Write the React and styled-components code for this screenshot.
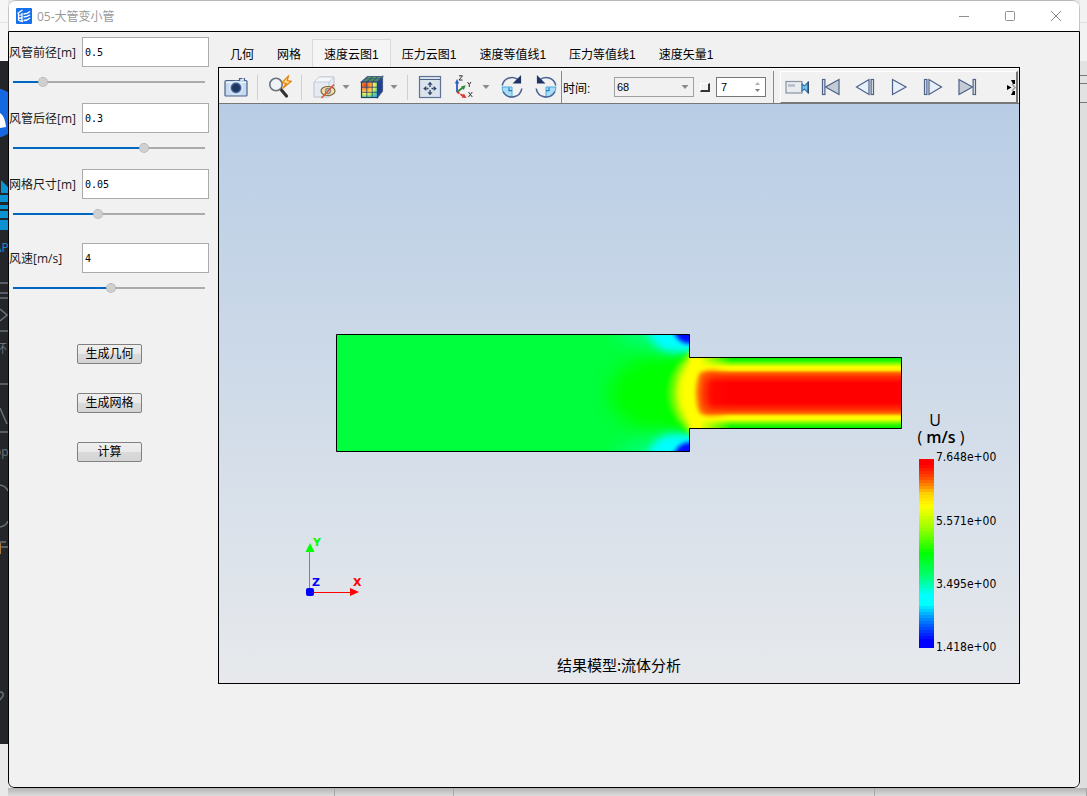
import React, { useState } from 'react'
import styled, { createGlobalStyle } from 'styled-components'

const GlobalStyle = createGlobalStyle`
* {
    box-sizing: border-box;
}
body {
    margin: 0;
    background: #e9e9e9;
    color: #1a1a1a;
    font-family: "Open Sans", "Noto Sans CJK SC", sans-serif;
    font-size: 12px;
}
button, input, select {
    font: inherit;
    color: inherit;
    margin: 0;
}
`

/* desktop behind the window */

const Desktop = styled.div`
display: grid;
grid-template-columns: 8px 1fr 7px;
grid-template-rows: 1fr 8px;
height: 100vh;
min-height: 700px;
overflow: hidden;
`

const LeftStrip = styled.svg`
grid-row: 1 / 3;
width: 8px;
height: 100%;
`

const RightStrip = styled.svg`
width: 7px;
height: 100%;
`

const BottomStrip = styled.div`
grid-column: 2 / 4;
display: flex;
background: linear-gradient(#b4b4b4, #dcdcdc);
`

const BottomCell = styled.div`
flex: ${props => props.$grow};
border-right: 1px solid #a8a8a8;
`

/* window */

const Window = styled.div`
display: flex;
flex-direction: column;
min-width: 0;
background: #f1f1f1;
border: 1px solid #b9b9b9;
border-width: 1px 0 0 0;
border-radius: 8px 8px 6px 6px;
overflow: hidden;
`

const TitleBar = styled.header`
display: flex;
align-items: center;
height: 30px;
padding-left: 7px;
background: white;
border: 1px solid #c4c4c4;
border-width: 0 1px;
color: #999;
`

const Title = styled.h1`
flex: 1;
margin: 0 0 0 5px;
font-size: 12px;
font-weight: 400;
`

const WindowButton = styled.button`
width: 46px;
height: 29px;
padding: 0;
border: 0;
background: none;
display: grid;
place-items: center;
`

const Body = styled.div`
flex: 1;
display: flex;
min-height: 0;
border: 1px solid black;
border-radius: 0 0 6px 6px;
`

/* parameter panel */

const Sidebar = styled.form`
width: 209px;
flex: none;
padding-top: 5px;
`

const Param = styled.div`
display: grid;
grid-template-columns: 73px 127px;
row-gap: 7px;
align-items: center;
margin-bottom: ${props => props.$last ? '48px' : '13px'};
margin-top: ${props => props.$last ? '21px' : '0'};
`

const ParamLabel = styled.label`
white-space: nowrap;
`

const TextInput = styled.input`
height: 30px;
width: 100%;
padding: 0 2px;
background: white;
border: 1px solid #ababab;
font-family: "DejaVu Sans Mono", monospace;
font-size: 10px;
color: black;
`

const Slider = styled.input`
grid-column: 1 / 3;
appearance: none;
height: 16px;
margin: 0 4px;
background: none;

&::-webkit-slider-runnable-track {
    height: 2px;
    background: linear-gradient(to right, #0067c0 var(--fill), #ababab var(--fill));
}
&::-webkit-slider-thumb {
    appearance: none;
    width: 10px;
    height: 10px;
    margin-top: -4px;
    border: 1px dotted #a8a8a8;
    border-radius: 50%;
    background: #d0d0d0;
}
`

const Actions = styled.div`
display: flex;
flex-direction: column;
align-items: center;
gap: 29px;
padding-right: 8px;
`

const ActionButton = styled.button`
width: 65px;
height: 20px;
padding: 0;
border: 1px solid #808080;
border-radius: 2px;
background: linear-gradient(#efefef, #e9e9e9 50%, #dadada 50%, #d4d4d4);
color: black;
line-height: 18px;
`

/* result viewer */

const Main = styled.main`
flex: 1;
min-width: 0;
display: flex;
flex-direction: column;
padding: 7px 59px 103px 0;
`

const Tabs = styled.div`
display: flex;
`

const Tab = styled.button`
height: 28px;
padding: 0 11px;
border: 1px solid ${props => props.$active ? '#dadada' : 'transparent'};
border-bottom: 0;
background: ${props => props.$active ? '#f5f5f5' : 'none'};
color: black;
font-family: "Liberation Sans", "Noto Sans CJK SC", sans-serif;
white-space: nowrap;

& + & {
    margin-left: -1px;
}
`

const Viewer = styled.section`
flex: 1;
min-height: 0;
display: flex;
flex-direction: column;
border: 1px solid black;
`

const Toolbar = styled.div`
flex: none;
display: flex;
height: 36px;
padding: 2px 1px 0 5px;
border-top: 1px solid white;
border-bottom: 1px solid #777;
font-family: "Liberation Sans", "Noto Sans CJK SC", sans-serif;
color: black;
`

const ToolGroup = styled.div`
display: flex;
align-items: center;
align-self: center;
gap: 10px;
height: 25px;

& + & {
    margin-left: 9px;
    padding-left: 10px;
    border-left: 1px solid #cfcfcf;
}
`

const ToolButton = styled.button`
display: flex;
align-items: center;
gap: 6px;
padding: 0;
border: 0;
background: none;
`

const TimeBar = styled.div`
display: flex;
align-items: center;
margin-left: 3px;
padding: 0 7px 0 1px;
border: 1px solid #8a8a8a;
border-width: 0 1px;
`

const TimeLabel = styled.label`
width: 51px;
font-size: 12px;
`

const TimeSelect = styled.div`
display: flex;
align-items: center;
height: 20px;
width: 80px;
border: 1px solid #a0a0a0;

select {
    appearance: none;
    flex: 1;
    min-width: 0;
    height: 18px;
    padding: 0 2px;
    border: 0;
    background: none;
    font-size: 11px;
}
svg {
    margin-right: 4px;
    margin-left: -12px;
    pointer-events: none;
}
`

const Notch = styled.span`
width: 10px;
height: 9px;
margin: 0 6px;
border: 1px solid #fff;
border-right: 2px solid #333;
border-bottom: 2px solid #333;
`

const Spin = styled.div`
display: flex;
height: 20px;
width: 50px;
background: white;
border: 1px solid #777;

input {
    appearance: textfield;
    flex: 1;
    min-width: 0;
    padding: 0 4px;
    border: 0;
    background: none;
    font-size: 11px;
}
input::-webkit-inner-spin-button {
    display: none;
}
`

const SpinButtons = styled.div`
display: flex;
flex-direction: column;
justify-content: center;
gap: 1px;
width: 16px;
`

const SpinButton = styled.button`
height: 6px;
padding: 0;
border: 0;
background: none;
display: grid;
place-items: center;
`

const Playback = styled.div`
flex: 1;
display: flex;
align-items: center;
gap: 10px;
margin-left: 6px;
padding-left: 4px;
border: 1px solid white;
border-right: 2px solid #777;
border-bottom: 1px solid #777;
`

const MoreButton = styled(ToolButton)`
margin-left: auto;
`

const Scene = styled.svg`
flex: 1;
min-height: 0;
width: 100%;
background: linear-gradient(#b8cde5, #e7e9ec);
`

const tones = {
    line: '#4d6288',
    dark: '#2b3f66',
}

const Icon = ({ children, size = 24 }) => (
    <svg width={size} height={size} viewBox="0 0 24 24" fill="none" stroke={tones.line} strokeWidth="1.2">
        {children}
    </svg>
)

const Caret = () => (
    <svg width="8" height="4" viewBox="0 0 8 4" fill="#8a8a8a">
        <path d="M.5 0h7L4 4z" />
    </svg>
)

const SmallCaret = ({ up }) => (
    <svg width="5" height="3" viewBox="0 0 5 3" fill={up ? '#b0b0b0' : '#808080'}>
        <path d={up ? 'M0 3h5L2.5 0z' : 'M0 0h5L2.5 3z'} />
    </svg>
)

const CameraIcon = () => (
    <Icon>
        <path d="M2.500 5.500h13v-2h5v2H22q1 0 1 1V20q0 1-1 1H2q-1 0-1-1V6.500q0-1 1.500-1z" fill="#c6daf0" />
        <path d="M2 7.500h20" stroke="#f4f9ff" />
        <circle cx="12" cy="12.800" r="6.500" fill="#8fabd0" stroke="#e6eff9" />
        <circle cx="12" cy="12.800" r="4.500" fill="#1e3663" stroke="#3f5d92" />
        <path d="M18 4h2" stroke="#fff" />
    </Icon>
)

const ZoomIcon = () => (
    <Icon>
        <path d="M13 14.500l5.500 6.500" stroke="#333" strokeWidth="3.200" strokeLinecap="round" />
        <circle cx="8" cy="9.500" r="6.200" fill="#eef3f8" stroke="#6a727c" strokeWidth="1.600" />
        <path d="M20.500 1L14 7.500l4.200.8L14.500 13.500l8.800-7.200-4-.8z" fill="#ffdf8a" stroke="#e8820c" strokeWidth="1.200" />
    </Icon>
)

const SectionIcon = () => (
    <Icon>
        <path d="M2 7l5-5h15v14l-5 6H2z" fill="#e6ebf1" stroke="#b9c2cd" strokeWidth="1" />
        <path d="M2 7l5-5h15l-5 5z" fill="#f4f7fa" stroke="#c6ced8" strokeWidth="1" />
        <path d="M17 7v14" stroke="#b9c2cd" strokeWidth="1" />
        <ellipse cx="16" cy="16" rx="7" ry="4.500" fill="#f6dfa0" stroke="#75664a" />
        <circle cx="16" cy="16" r="2.600" fill="#aebfd6" stroke="#8d8a80" />
        <path d="M9.500 23L22 9.500" stroke="#e0532c" strokeWidth="1.400" />
    </Icon>
)

const ContourIcon = () => (
    <Icon>
        <defs>
            <radialGradient id="cube" cx=".25" cy=".2" r="1">
                <stop offset="0" stopColor="#f03c20" />
                <stop offset=".35" stopColor="#ffb040" />
                <stop offset=".55" stopColor="#ffee50" />
                <stop offset=".75" stopColor="#6fdc80" />
                <stop offset="1" stopColor="#30b0f0" />
            </radialGradient>
        </defs>
        <path d="M1.500 7l6-5.500h15l-5 5.500z" fill="#68b86a" />
        <path d="M17.500 7l5-5.500V16l-5 6.500z" fill="#1c3fb8" />
        <rect x="1.500" y="7" width="16" height="15.500" fill="url(#cube)" stroke="#24406b" />
        <path d="M6.800 7v15.500M12.200 7v15.500M1.500 12.200h16M1.500 17.300h16M3.500 5h15.600M5.500 3.200h15.500M6.800 7l6-5.500M12.200 7l5.500-5.500M19.200 5v15.200M21 3.200V18M17.500 12l5-5M17.500 17.300l5-5.500"
            stroke="#26406f" strokeWidth=".8" />
    </Icon>
)

const FitIcon = () => (
    <Icon>
        <rect x="1.500" y="1.500" width="21" height="21" fill="#dbe3ec" stroke="#5f7396" />
        <path d="M2 4.500h20" stroke="#4d6288" strokeWidth="1.200" />
        <path d="M12 6.800l2.600 3H9.400zM12 20.200l2.600-3H9.400zM5.300 13.500l3-2.600v5.200zM18.700 13.500l-3-2.600v5.200z" fill={tones.dark} stroke="none" />
        <path d="M12 10v2M12 15v2M8.500 13.500h2M13.500 13.500h2" stroke={tones.dark} strokeWidth="1.400" />
    </Icon>
)

const AxesIcon = () => (
    <Icon>
        <path d="M5 17V7" stroke="#2f5cc0" strokeWidth="1.800" />
        <path d="M5 4L2.800 8.500h4.400z" fill="#2f5cc0" stroke="none" />
        <path d="M5 17l6-4.500" stroke="#2c8a3a" strokeWidth="1.800" />
        <path d="M13.800 10.300L9 11.500l2.800 3.600z" fill="#2c8a3a" stroke="none" />
        <path d="M5 17l6 3.800" stroke="#e03030" strokeWidth="1.800" strokeDasharray="3 1" />
        <path d="M14.500 23l-5-.6 2.400-3.800z" fill="#e03030" stroke="none" />
        <path d="M7 .8h3.500L7 5h3.500M15.500 7l1.800 2.500L19 7M17.300 9.500V12M16.500 17l3.800 5M20.300 17l-3.800 5" stroke="#333" strokeWidth="1" />
    </Icon>
)

const RotateIcon = ({ flip }) => (
    <Icon>
        <g transform={flip ? 'matrix(-1 0 0 1 24 0)' : undefined}>
            <path d="M2 12h10v10A10 10 0 0 1 2 12z" fill="#a9dcf8" stroke="#4aa8de" strokeWidth="1" />
            <path d="M9 12.500v3.200H12" stroke="#1f7fc0" />
            <path d="M2.200 10.500A10 10 0 0 1 18.500 5M21.800 13.500A10 10 0 0 1 3 16.500" stroke="#4a6496" strokeWidth="1.600" />
            <path d="M20.500 1.500v6.500h-6.500z" fill="#1f3566" stroke="#1f3566" />
        </g>
    </Icon>
)

const VideoIcon = () => (
    <Icon>
        <rect x="1" y="6.500" width="16" height="11.500" fill="#e9ebee" stroke="#8793a6" />
        <path d="M3 10.500h7" stroke="#b4bbc6" strokeWidth="2.500" />
        <path d="M17 9l2.500 2L23 7.500v10L19.500 14 17 16z" fill="#7cc4ea" stroke="#2d78ad" />
        <path d="M23.300 6.500v12" stroke={tones.dark} strokeWidth="1.200" />
    </Icon>
)

const FirstIcon = ({ flip }) => (
    <Icon>
        <g transform={flip ? 'matrix(-1 0 0 1 24 0)' : undefined}>
            <path d="M20 4.500v15L6.500 12z" fill="#c5ccd6" />
            <rect x="3.500" y="4.500" width="2.400" height="15" fill="#dfe6ee" />
        </g>
    </Icon>
)

const StepIcon = ({ flip }) => (
    <Icon>
        <g transform={flip ? 'matrix(-1 0 0 1 24 0)' : undefined}>
            <rect x="3.500" y="4.500" width="2.400" height="15" fill="#dfe6ee" />
            <path d="M8 4.500v15L20.500 12z" fill="#e6effa" />
        </g>
    </Icon>
)

const PlayIcon = () => (
    <Icon>
        <path d="M5.500 4.500v15L19 12z" fill="#e6effa" />
    </Icon>
)

const MoreIcon = () => (
    <svg width="9" height="15" viewBox="0 0 9 15">
        <path d="M0 5l4.500 2.500L0 10z" fill="black" />
        <path d="M4 0h4v4H6zM4 15h4v-4H6z" fill="black" />
        <path d="M5 4l3 3.500L5 11" fill="none" stroke="#a0a0a0" strokeWidth="1.500" />
    </svg>
)

const AppIcon = () => (
    <svg width="16" height="16" viewBox="0 0 16 16">
        <rect width="16" height="16" rx="1" fill="#1670ee" />
        <path d="M1.500 5.500L6.500 2M2.500 5.500V12q2 1.500 4.500 1.500M2.500 7.500L6 6.500M2.500 10H6M6 5v8M7.500 6q4 0 6.500-2.500M7.500 9q4 0 6.500-2.300M7.500 12.500q4 0 6.500-2.500"
            fill="none" stroke="white" strokeWidth="1.300" />
    </svg>
)

/* colour scale of the velocity legend, from the maximum down */
const scale = [
    [0, 255, 0, 0], [0.03, 255, 0, 0], [0.1, 255, 75, 0], [0.15, 255, 150, 0], [0.18, 255, 205, 0],
    [0.25, 255, 255, 0], [0.37, 150, 255, 0], [0.5, 0, 255, 0], [0.62, 0, 255, 115], [0.72, 0, 255, 255],
    [0.77, 0, 255, 255], [0.83, 0, 160, 255], [0.9, 0, 70, 255], [0.96, 0, 0, 255], [1, 0, 0, 255],
]

const colorAt = t => {
    const i = Math.max(1, scale.findIndex(stop => stop[0] >= t))
    const a = scale[i - 1]
    const b = scale[i]
    const k = (t - a[0]) / (b[0] - a[0])
    const mix = [1, 2, 3].map(c => Math.round(a[c] + (b[c] - a[c]) * k))
    return `rgb(${mix.join(',')})`
}

const bands = Array.from({ length: 63 }, (_, i) => colorAt((i + 0.5) / 63))

const legendLabels = [
    { y: 357, text: '7.648e+00' },
    { y: 421, text: '5.571e+00' },
    { y: 484, text: '3.495e+00' },
    { y: 547, text: '1.418e+00' },
]

const outline = 'M117.500 230.500H470.500V253.500H682.500V324.500H470.500V347.500H117.500z'

const Corner = () => (
    <g>
        <path d="M385 210H490V252Q440 250 412 240Q395 232 385 210z" fill="#00ff78" filter="url(#blur9)" opacity=".9" />
        <path d="M424 218H490V247Q456 250 444 246Q430 238 424 218z" fill="#00ffff" filter="url(#blur4)" />
        <path d="M452 220H490V239.500H467Q456 237 452 220z" fill="#0010ff" filter="url(#blur2)" />
    </g>
)

const Pipe = () => (
    <g>
        <defs>
            <clipPath id="pipe"><path d={outline} /></clipPath>
            {[2, 4, 9].map(n => (
                <filter key={n} id={`blur${n}`} x="-50%" y="-50%" width="200%" height="200%">
                    <feGaussianBlur stdDeviation={n} />
                </filter>
            ))}
            <linearGradient id="wall" x1="0" y1="0" x2="0" y2="1">
                <stop offset="0" stopColor="#00e800" />
                <stop offset=".05" stopColor="#20f800" />
                <stop offset=".11" stopColor="#b0ff00" />
                <stop offset=".14" stopColor="#ffff00" />
                <stop offset=".18" stopColor="#ffee00" />
                <stop offset=".22" stopColor="#ff6800" />
                <stop offset=".27" stopColor="#ff3000" />
                <stop offset=".36" stopColor="#ff0000" />
                <stop offset=".64" stopColor="#ff0000" />
                <stop offset=".73" stopColor="#ff3000" />
                <stop offset=".78" stopColor="#ff6800" />
                <stop offset=".82" stopColor="#ffee00" />
                <stop offset=".86" stopColor="#ffff00" />
                <stop offset=".89" stopColor="#b0ff00" />
                <stop offset=".95" stopColor="#20f800" />
                <stop offset="1" stopColor="#00e800" />
            </linearGradient>
            <linearGradient id="inlet" gradientUnits="userSpaceOnUse" x1="480" y1="0" x2="512" y2="0">
                <stop offset="0" stopColor="black" />
                <stop offset="1" stopColor="white" />
            </linearGradient>
            <mask id="fade" maskUnits="userSpaceOnUse" x="470" y="250" width="214" height="80">
                <rect x="470" y="250" width="214" height="80" fill="url(#inlet)" />
            </mask>
        </defs>
        <g clipPath="url(#pipe)">
            <rect x="117" y="230" width="354" height="118" fill="#00ff3c" />
            <ellipse cx="460" cy="289" rx="70" ry="42" fill="#00ff00" filter="url(#blur9)" />
            <Corner />
            <g transform="matrix(1 0 0 -1 0 578)"><Corner /></g>
            <ellipse cx="482" cy="289" rx="48" ry="39" fill="#00ff00" filter="url(#blur4)" />
            <ellipse cx="490" cy="289" rx="42" ry="42" fill="#30ff00" filter="url(#blur2)" />
            <ellipse cx="496" cy="289" rx="40" ry="46" fill="#ffff00" filter="url(#blur4)" />
            <rect x="471" y="248" width="50" height="82" fill="#ffff00" filter="url(#blur2)" />
            <path d="M482 248V330" stroke="#ffb400" strokeWidth="4" filter="url(#blur2)" />
            <path d="M480 270Q474 289 480 308Q490 316 515 310V268Q490 262 480 270z" fill="#ff7000" filter="url(#blur2)" />
            <path d="M489 272Q482 289 489 306H520V272z" fill="#ff1000" filter="url(#blur4)" />
            <rect x="471" y="253" width="212" height="72" fill="url(#wall)" mask="url(#fade)" />
        </g>
        <path d={outline} fill="none" stroke="black" />
    </g>
)

const Triad = () => (
    <g fontFamily="DejaVu Sans, sans-serif" fontSize="11" fontWeight="700">
        <path d="M90.500 486V446" stroke="#00e000" />
        <path d="M91 439l4.500 9h-9z" fill="#00ff00" />
        <path d="M93 488.500H132" stroke="#ff0000" />
        <path d="M140 488l-9-4v8z" fill="#ff0000" />
        <rect x="87" y="484" width="8" height="8" rx="2" fill="#0000ff" />
        <text x="94" y="442" fill="#00ff00">Y</text>
        <text x="134" y="482" fill="#ff0000">X</text>
        <text x="93" y="482" fill="#0000ff">Z</text>
    </g>
)

const Legend = () => (
    <g fontFamily="DejaVu Sans Condensed, DejaVu Sans, sans-serif" fontSize="12" fill="black">
        <g fontFamily="Open Sans, sans-serif" fontSize="16" textAnchor="middle">
            <text x="716" y="322" fontWeight="500">U</text>
            <text x="722" y="339">( <tspan fontWeight="600">m/s</tspan> )</text>
        </g>
        {bands.map((color, i) => (
            <rect key={i} x="700" y={355 + i * 3} width="15" height="3" fill={color} />
        ))}
        {legendLabels.map(label => (
            <text key={label.y} x="717" y={label.y}>{label.text}</text>
        ))}
    </g>
)

const params = [
    { id: 'front', label: '风管前径[m]', value: '0.5', position: 14 },
    { id: 'back', label: '风管后径[m]', value: '0.3', position: 69 },
    { id: 'mesh', label: '网格尺寸[m]', value: '0.05', position: 44 },
    { id: 'speed', label: '风速[m/s]', value: '4', position: 51 },
]

const tabs = ['几何', '网格', '速度云图1', '压力云图1', '速度等值线1', '压力等值线1', '速度矢量1']

const ParamField = ({ param, last }) => {
    const [position, setPosition] = useState(param.position)
    return (
        <Param $last={last}>
            <ParamLabel htmlFor={param.id}>{param.label}</ParamLabel>
            <TextInput id={param.id} defaultValue={param.value} />
            <Slider
                type="range"
                aria-label={param.label}
                value={position}
                style={{ '--fill': `${position}%` }}
                onChange={e => setPosition(Number(e.target.value))}
            />
        </Param>
    )
}

const App = () => {
    const [active, setActive] = useState('速度云图1')
    return (
        <>
            <GlobalStyle />
            <Desktop>
                <LeftStrip>
                    <rect width="8" height="61" fill="#f6f6f6" />
                    <path d="M0 22.500h8" stroke="#e4e4e4" />
                    <rect y="61" width="8" height="683" fill="#232529" />
                    <circle cx="-6" cy="113" r="25" fill="#1668e0" />
                    <path d="M0 113q5 3 6 14l-6 1z" fill="white" />
                    <path d="M1 180l7 7v6H1zM0 195h8v7H0zM0 205h8v4H0zM0 211h8v7H0zM0 220h8v10H0z" fill="#0a93d0" />
                    <g fill="none" stroke="#6c7079" strokeWidth="1.500">
                        <path d="M0 283h8M0 293h8M0 298h8M0 309l7 6-7 6M0 331h8M0 384h8M0 432h8M0 485q6 1 8 6M0 527q6-1 8-6M0 408l7 16M0 542h6M0 547h8M0 692q4 0 3 4l-3 4" />
                    </g>
                    <path d="M0 543h1v11H0z" fill="#a87a3c" />
                    <g fontFamily="Open Sans, Noto Sans CJK SC, sans-serif" fontSize="12">
                        <text x="-6" y="252" fill="#0a93d0">AP</text>
                        <text x="-5" y="353" fill="#6c7079">环</text>
                        <text x="-6" y="456" fill="#6c7079">op</text>
                    </g>
                </LeftStrip>
                <Window>
                    <TitleBar>
                        <AppIcon />
                        <Title>05-大管变小管</Title>
                        <WindowButton aria-label="最小化">
                            <svg width="10" height="10" stroke="#8f8f8f"><path d="M0 5.500h10" /></svg>
                        </WindowButton>
                        <WindowButton aria-label="最大化">
                            <svg width="10" height="10" fill="none" stroke="#8f8f8f"><rect x=".5" y=".5" width="9" height="9" rx="1" /></svg>
                        </WindowButton>
                        <WindowButton aria-label="关闭">
                            <svg width="10" height="10" stroke="#8f8f8f"><path d="M0 0l10 10M10 0L0 10" /></svg>
                        </WindowButton>
                    </TitleBar>
                    <Body>
                        <Sidebar onSubmit={e => e.preventDefault()}>
                            {params.map((param, i) => (
                                <ParamField key={param.id} param={param} last={i === params.length - 1} />
                            ))}
                            <Actions>
                                <ActionButton>生成几何</ActionButton>
                                <ActionButton>生成网格</ActionButton>
                                <ActionButton>计算</ActionButton>
                            </Actions>
                        </Sidebar>
                        <Main>
                            <Tabs role="tablist">
                                {tabs.map(tab => (
                                    <Tab key={tab} role="tab" aria-selected={tab === active} $active={tab === active} onClick={() => setActive(tab)}>
                                        {tab}
                                    </Tab>
                                ))}
                            </Tabs>
                            <Viewer>
                                <Toolbar>
                                    <ToolGroup>
                                        <ToolButton aria-label="截图"><CameraIcon /></ToolButton>
                                    </ToolGroup>
                                    <ToolGroup>
                                        <ToolButton aria-label="缩放"><ZoomIcon /></ToolButton>
                                    </ToolGroup>
                                    <ToolGroup>
                                        <ToolButton aria-label="剖面"><SectionIcon /><Caret /></ToolButton>
                                        <ToolButton aria-label="云图"><ContourIcon /><Caret /></ToolButton>
                                    </ToolGroup>
                                    <ToolGroup>
                                        <ToolButton aria-label="适应窗口"><FitIcon /></ToolButton>
                                        <ToolButton aria-label="视角"><AxesIcon /><Caret /></ToolButton>
                                        <ToolButton aria-label="顺时针旋转"><RotateIcon /></ToolButton>
                                        <ToolButton aria-label="逆时针旋转"><RotateIcon flip /></ToolButton>
                                    </ToolGroup>
                                    <TimeBar>
                                        <TimeLabel htmlFor="time">时间:</TimeLabel>
                                        <TimeSelect>
                                            <select id="time" defaultValue="68">
                                                <option>68</option>
                                            </select>
                                            <Caret />
                                        </TimeSelect>
                                        <Notch />
                                        <Spin>
                                            <input type="number" aria-label="帧" defaultValue="7" />
                                            <SpinButtons>
                                                <SpinButton aria-label="增加"><SmallCaret up /></SpinButton>
                                                <SpinButton aria-label="减少"><SmallCaret /></SpinButton>
                                            </SpinButtons>
                                        </Spin>
                                    </TimeBar>
                                    <Playback>
                                        <ToolButton aria-label="录制"><VideoIcon /></ToolButton>
                                        <ToolButton aria-label="第一帧"><FirstIcon /></ToolButton>
                                        <ToolButton aria-label="上一帧"><StepIcon flip /></ToolButton>
                                        <ToolButton aria-label="播放"><PlayIcon /></ToolButton>
                                        <ToolButton aria-label="下一帧"><StepIcon /></ToolButton>
                                        <ToolButton aria-label="最后一帧"><FirstIcon flip /></ToolButton>
                                        <MoreButton aria-label="更多"><MoreIcon /></MoreButton>
                                    </Playback>
                                </Toolbar>
                                <Scene viewBox="0 0 800 579">
                                    <Pipe />
                                    <Triad />
                                    <Legend />
                                    <text x="400" y="567" textAnchor="middle" fontFamily="Noto Sans CJK SC, sans-serif" fontSize="15">
                                        结果模型:流体分析
                                    </text>
                                </Scene>
                            </Viewer>
                        </Main>
                    </Body>
                </Window>
                <RightStrip>
                    <rect width="7" height="61" fill="#f2f2f2" />
                    <path d="M0 22.500h7" stroke="#dedede" />
                    <rect y="61" width="7" height="42" fill="#e2e2e2" />
                    <path d="M0 75.500h7M0 83.500h7M0 102.500h7" stroke="#777" />
                    <rect y="103" width="7" height="700" fill="#dedede" />
                </RightStrip>
                <BottomStrip>
                    <BottomCell $grow={327} />
                    <BottomCell $grow={119} />
                    <BottomCell $grow={421} />
                    <BottomCell $grow={212} />
                </BottomStrip>
            </Desktop>
        </>
    )
}

export default App
